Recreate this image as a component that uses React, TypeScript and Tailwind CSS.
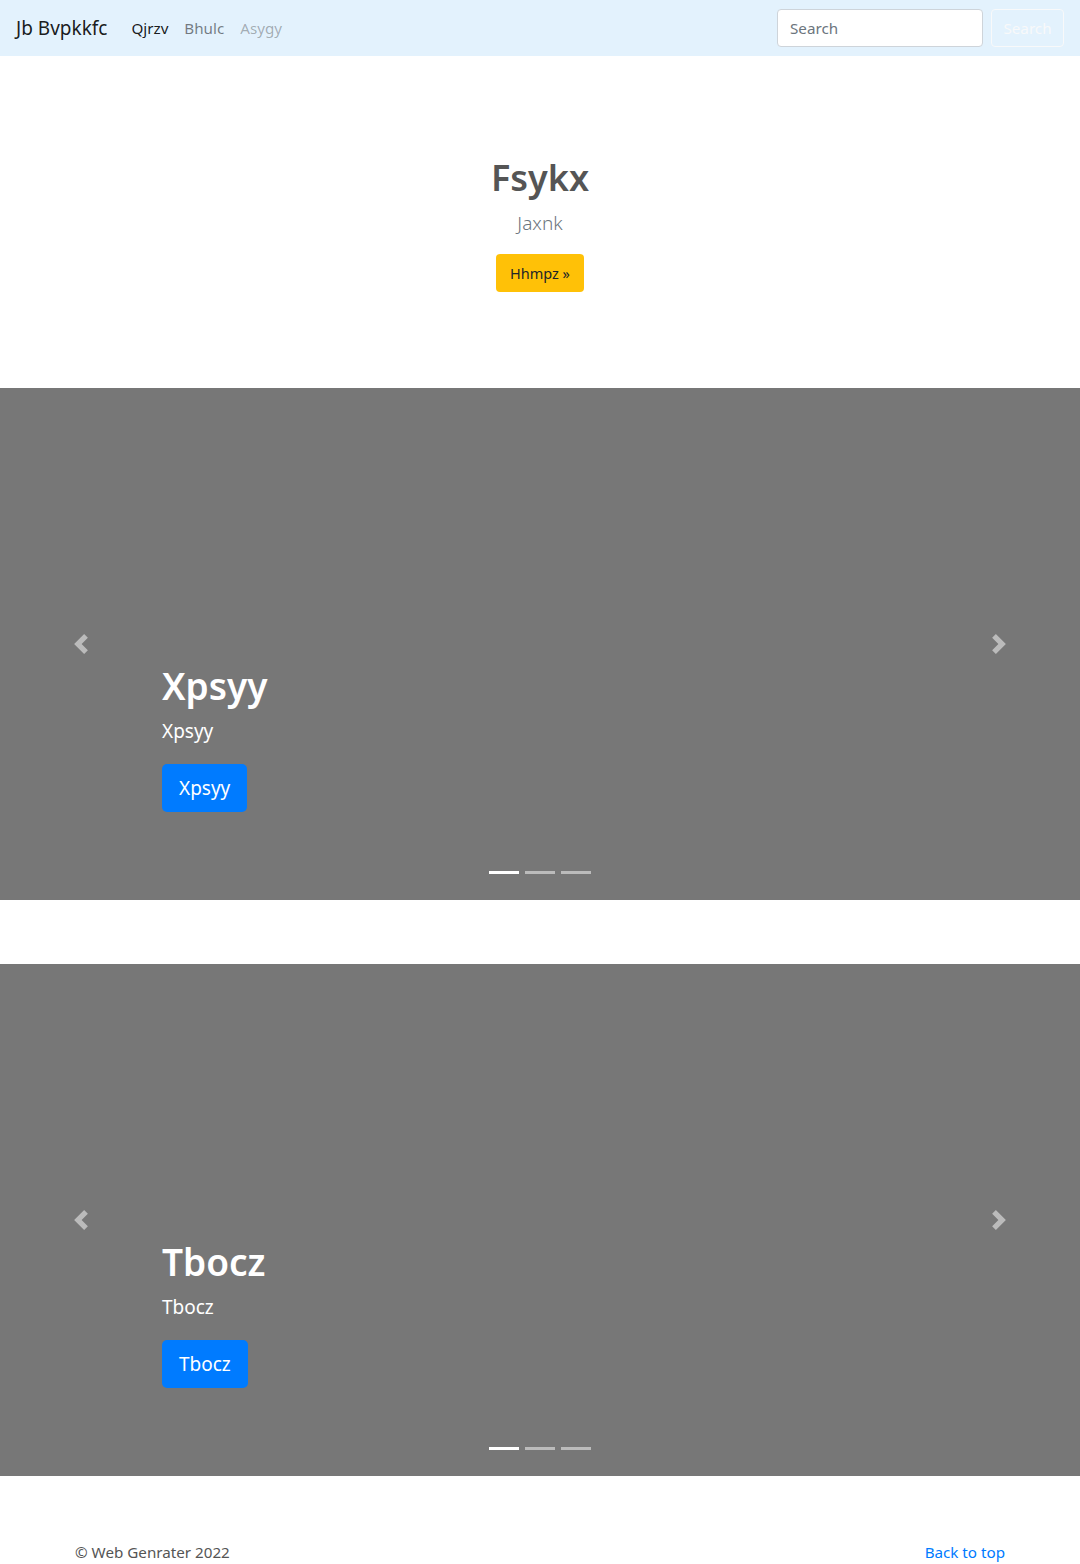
const font = { fontFamily: '"Noto Sans", "Liberation Sans", sans-serif' };

const Prev = () => (
  <svg width="20" height="20" viewBox="0 0 8 8" fill="#fff">
    <path d="M5.25 0l-4 4 4 4 1.5-1.5L4.25 4l2.5-2.5L5.25 0z" />
  </svg>
);

const Next = () => (
  <svg width="20" height="20" viewBox="0 0 8 8" fill="#fff">
    <path d="M2.75 0l-1.5 1.5L3.75 4l-2.5 2.5L2.75 8l4-4-4-4z" />
  </svg>
);

const Slide = ({ title }: { title: string }) => (
  <div className="relative h-[512px] bg-[#777] flex flex-col justify-end">
    <div className="px-[162px] pb-[88px] text-white">
      <h1 className="text-[37px] leading-[48px] font-semibold mb-[6px]">{title}</h1>
      <p className="text-[19px] leading-[30px] mb-[18px]">{title}</p>
      <button className="bg-[#007bff] text-white text-[19px] leading-[30px] px-[17px] py-[9px] rounded-[5px]">
        {title}
      </button>
    </div>
    <div className="absolute left-0 top-0 bottom-0 w-[162px] flex items-center justify-center opacity-50">
      <Prev />
    </div>
    <div className="absolute right-0 top-0 bottom-0 w-[162px] flex items-center justify-center opacity-50">
      <Next />
    </div>
    <div className="absolute left-0 right-0 bottom-[26px] flex justify-center gap-[6px]">
      <span className="w-[30px] h-[3px] bg-white" />
      <span className="w-[30px] h-[3px] bg-white opacity-50" />
      <span className="w-[30px] h-[3px] bg-white opacity-50" />
    </div>
  </div>
);

export default function App() {
  return (
    <div style={font} className="bg-white text-[#212529] text-[15.2px]">
      <nav className="h-14 bg-[#e3f2fd] flex items-center px-4">
        <span className="text-[19px] leading-[30px] mr-4 text-[rgba(0,0,0,0.9)]">Jb Bvpkkfc</span>
        <div className="flex">
          <span className="px-2 leading-6 text-[rgba(0,0,0,0.9)]">Qjrzv</span>
          <span className="px-2 leading-6 text-[rgba(0,0,0,0.5)]">Bhulc</span>
          <span className="px-2 leading-6 text-[rgba(0,0,0,0.3)]">Asygy</span>
        </div>
        <div className="ml-auto flex items-center">
          <input
            placeholder="Search"
            style={font}
            className="w-[206px] h-[38px] px-3 bg-white border border-[#ced4da] rounded text-[15.2px] placeholder:text-[#6c757d] mr-2"
          />
          <button className="w-[73px] h-[38px] border border-[#f8f9fa] text-[#f8f9fa] rounded text-[15.2px]">
            Search
          </button>
        </div>
      </nav>

      <section className="pt-[98px] pb-[96px] text-center">
        <h1 className="text-[36px] leading-[48px] font-semibold text-[#555] mb-[6px]">Fsykx</h1>
        <p className="text-[19px] leading-[30px] font-light text-[#6c757d] mb-4">Jaxnk</p>
        <button className="bg-[#ffc107] text-[#212529] text-[14.5px] leading-[22px] px-[14px] py-2 rounded">
          Hhmpz »
        </button>
      </section>

      <Slide title="Xpsyy" />
      <div className="h-16" />
      <Slide title="Tbocz" />

      <footer className="pt-16 px-[75px] flex justify-between items-start leading-6">
        <span className="text-[#555]">© Web Genrater 2022</span>
        <span className="text-[#007bff]">Back to top</span>
      </footer>
    </div>
  );
}
